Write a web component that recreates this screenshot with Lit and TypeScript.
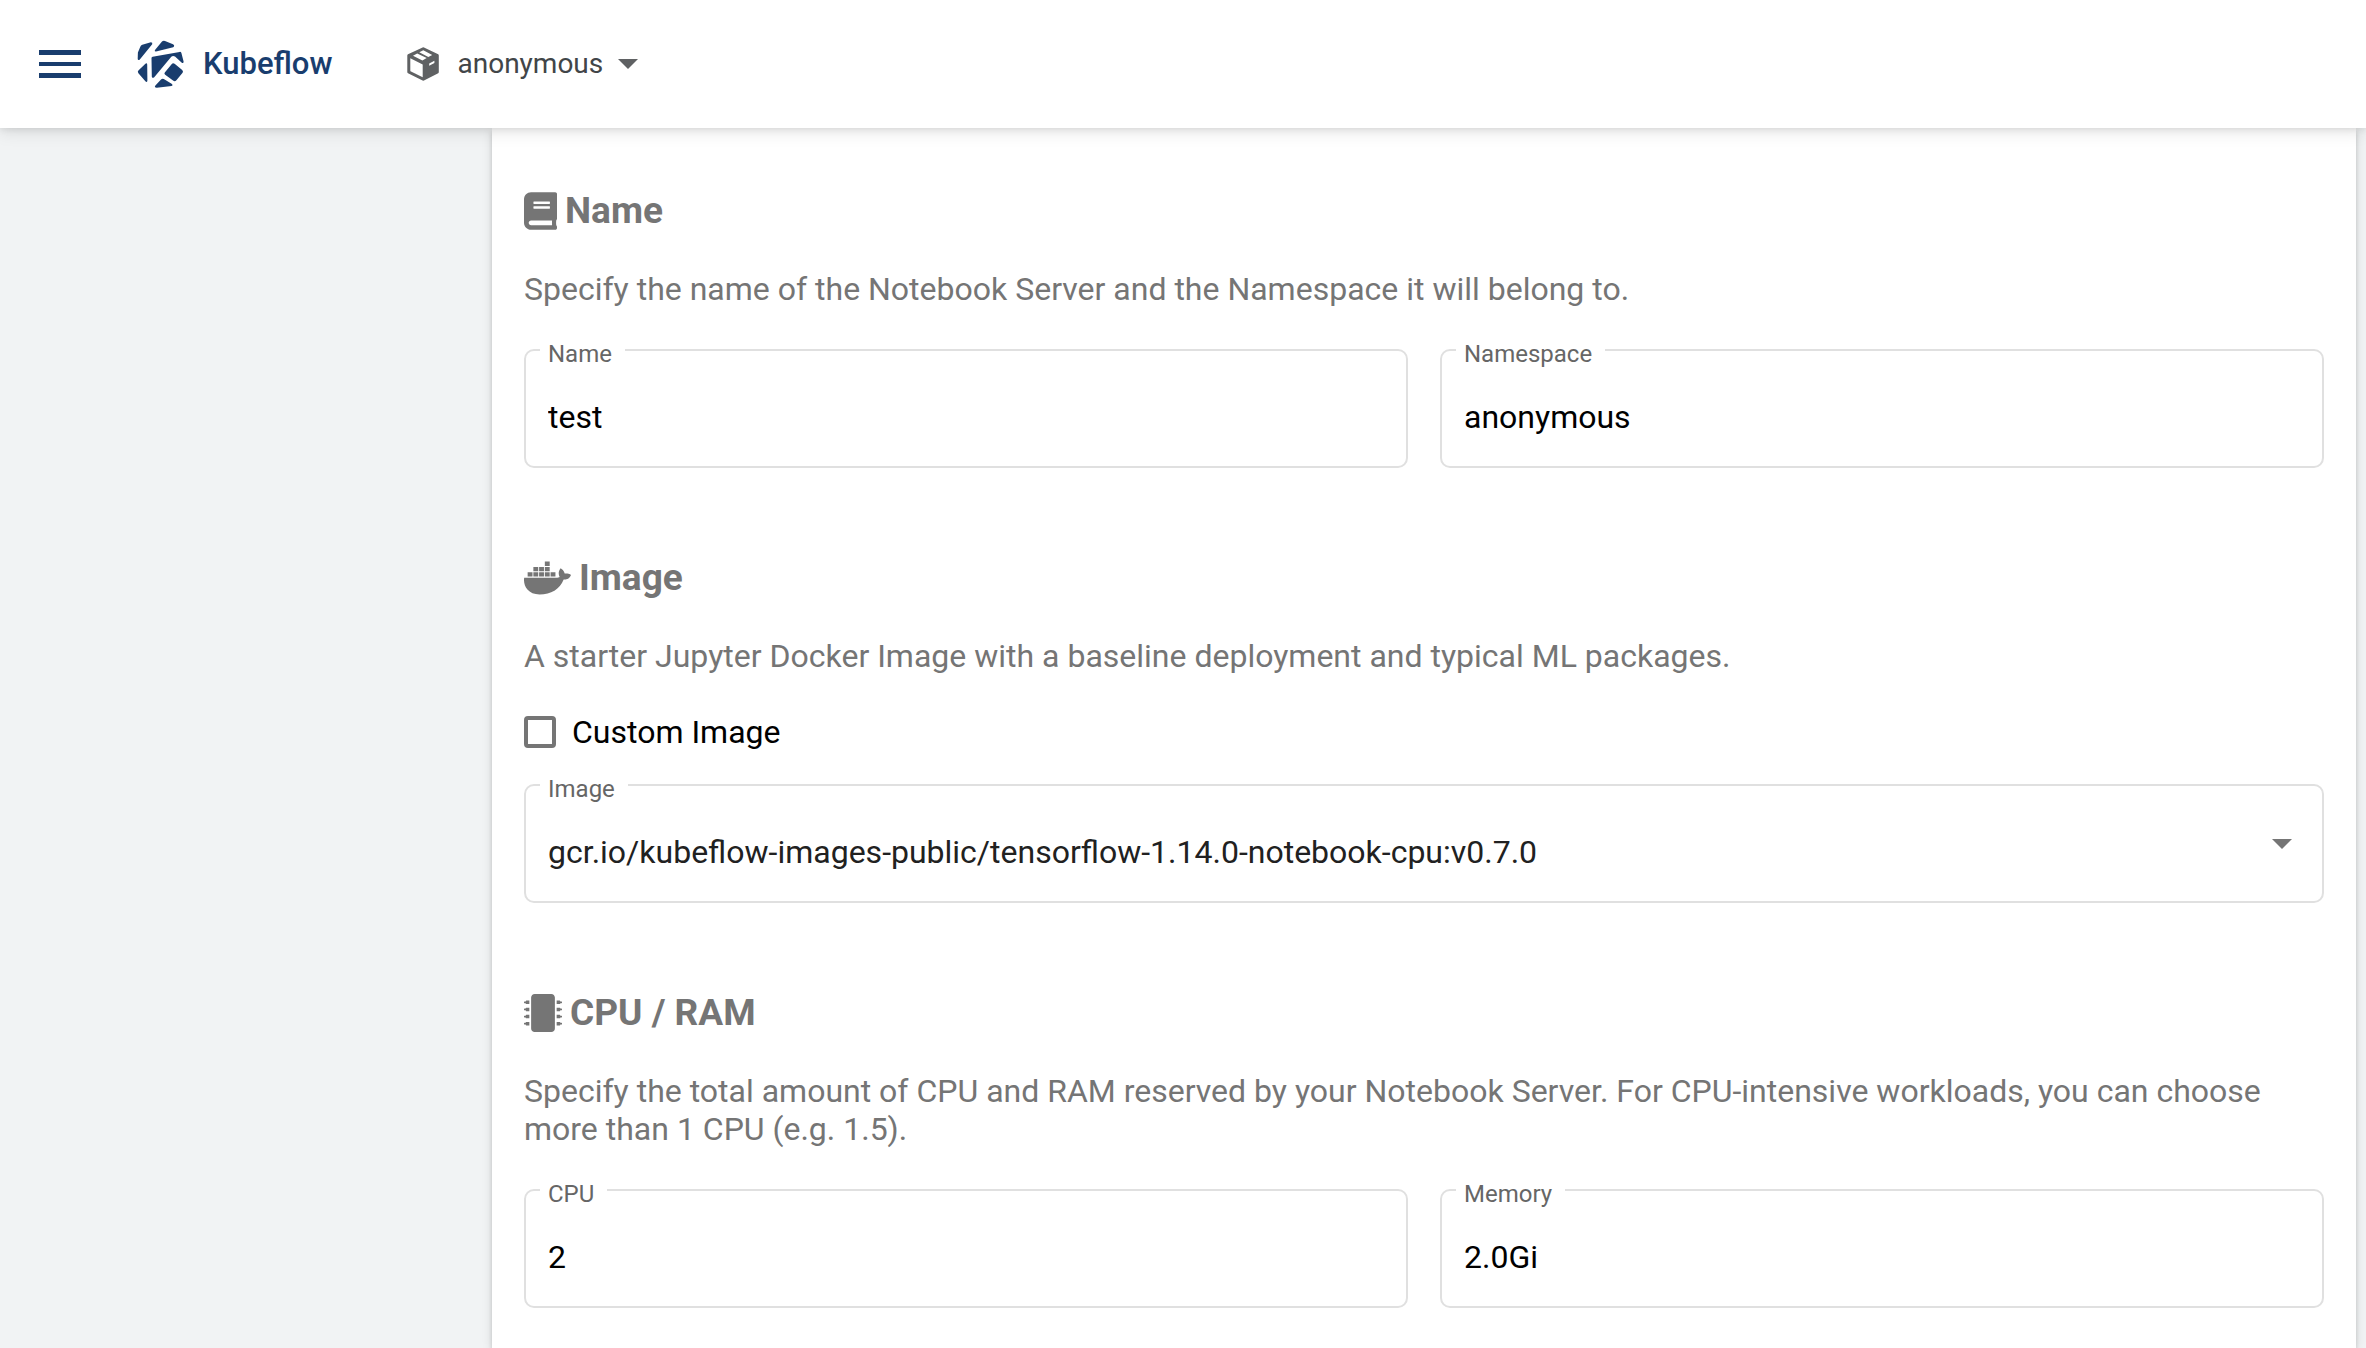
import { LitElement, html, css, svg } from "lit";
import { customElement, property } from "lit/decorators.js";

const bookPath =
  "M448 360V24c0-13.3-10.7-24-24-24H96C43 0 0 43 0 96v320c0 53 43 96 96 96h328c13.3 0 24-10.7 24-24v-16c0-7.5-3.5-14.3-8.9-18.7-4.2-15.4-4.2-59.3 0-74.7 5.4-4.3 8.9-11.1 8.9-18.6zM128 134c0-3.3 2.7-6 6-6h212c3.3 0 6 2.7 6 6v20c0 3.3-2.7 6-6 6H134c-3.3 0-6-2.7-6-6v-20zm0 64c0-3.3 2.7-6 6-6h212c3.3 0 6 2.7 6 6v20c0 3.3-2.7 6-6 6H134c-3.3 0-6-2.7-6-6v-20zm253.4 250H96c-17.7 0-32-14.3-32-32 0-17.6 14.4-32 32-32h285.4c-1.9 17.1-1.9 46.9 0 64z";
const whalePath =
  "M349.9 236.3h-66.1v-59.4h66.1v59.4zm0-204.3h-66.1v60.7h66.1V32zm78.2 144.8H362v59.4h66.1v-59.4zm-156.3-72.1h-66.1v60.1h66.1v-60.1zm78.1 0h-66.1v60.1h66.1v-60.1zm276.8 100c-14.4-9.7-47.6-13.2-73.1-8.4-3.3-24-16.7-44.9-41.1-63.7l-14-9.3-9.3 14c-18.4 27.8-23.4 73.6-3.7 103.8-8.7 4.7-25.8 11.1-48.4 10.7H2.4c-8.7 50.8 5.8 116.8 44 162.1 37.1 43.9 92.7 66.2 165.4 66.2 157.4 0 273.9-72.5 328.4-204.2 21.4.4 67.6.1 91.3-45.2 1.5-2.5 6.6-13.2 8.5-17.1l-13.3-8.9zm-511.1-27.9h-66v59.4h66.1v-59.4zm78.1 0h-66.1v59.4h66.1v-59.4zm78.1 0h-66.1v59.4h66.1v-59.4zm-78.1-72.1h-66.1v60.1h66.1v-60.1z";
const chipPins = [88, 184, 280, 376]
  .map(
    (y) =>
      `M512 ${y + 18}v12a6 6 0 0 1-6 6h-18v6a6 6 0 0 1-6 6h-42v-48h42a6 6 0 0 1 6 6v6h18a6 6 0 0 1 6 6z` +
      `M30 ${y}h42v48H30a6 6 0 0 1-6-6v-6H6a6 6 0 0 1-6-6v-12a6 6 0 0 1 6-6h18v-6a6 6 0 0 1 6-6z`,
  )
  .join("");
const chipPath =
  "M416 48v416c0 26.51-21.49 48-48 48H144c-26.51 0-48-21.49-48-48V48c0-26.51 21.49-48 48-48h224c26.51 0 48 21.49 48 48z" +
  chipPins;

const logoPath =
  "M.9 12.5L3.2 7Q3.8 5.3 5.3 4.8L13 2.4Q16 2 15.2 4.2L2.8 19.6Q.7 21 .7 18.5z" +
  "M18.2 9.8L25 1.6Q26.2.2 28 .9L36 4.2Q38.3 6 36.2 7.2L19 11.4Q16.8 11.6 18.2 9.8z" +
  "M14.5 18Q14.5 17 15.6 16.8L42.6 11.9Q44 11.7 44.4 13L46.6 21.6Q46.6 23.8 44.8 22.8L38 16.6Q36 15.2 34.3 16.8L17 37.4Q14.8 38.6 14.8 36.4z" +
  "M1.4 30.6L8.4 23.8Q10 22.6 10.2 24.4L10.4 40.4Q10.2 42.6 8.6 41.6L1.4 33.2Q.2 31.8 1.4 30.6z" +
  "M27.8 32.4L34.6 24.2Q36 22.6 37.6 23.8L45.2 30Q46.6 31.4 45.6 32.8L39.4 40.2Q38 41.8 36.4 40.8L28.2 34.8Q26.8 33.8 27.8 32.4z" +
  "M18.4 45.4L24 39.4Q25.4 38.2 26.8 39L35 44Q36.4 45.6 34.6 46.1L19.8 47.8Q16.8 47.4 18.4 45.4z";

const parcelPath =
  "M.3 8.4Q.3 7.6 1 7.2L15.6.4Q16.3.1 17 .4L31.2 7.3Q31.8 7.7 31.8 8.4V25Q31.8 25.8 31.2 26.2L17 33.5Q16.3 33.8 15.6 33.5L1 26.2Q.3 25.8 .3 25z" +
  "M3.3 11.3V23.4Q3.3 24.2 4 24.6L15.7 30.2V17.4z" +
  "M6 8.7L15.4 13.5L19.7 11.1L10.2 6.4z" +
  "M12.3 5.3L21.3 10.1L25.2 8L16.3 3.2z" +
  "M22.2 16.4L27.4 13.7V15.9L22.2 18.8z";

const icons: Record<string, { box: string; width: number; path: string }> = {
  book: { box: "0 0 448 512", width: 33, path: bookPath },
  whale: { box: "0 0 640 512", width: 47, path: whalePath },
  chip: { box: "0 0 512 512", width: 38, path: chipPath },
};

const caret = svg`<path d="M0 0h20L10 10z" fill="currentColor" />`;

@customElement("top-bar")
export class TopBar extends LitElement {
  static styles = css`
    :host {
      display: block;
      position: relative;
      z-index: 1;
      background: #fff;
      box-shadow: 0 0 8px rgba(0, 0, 0, 0.12), 0 4px 16px rgba(0, 0, 0, 0.1);
    }
    .bar {
      display: flex;
      align-items: center;
      height: 128px;
      padding: 0 39px;
      box-sizing: border-box;
    }
    button {
      display: flex;
      align-items: center;
      border: 0;
      padding: 0;
      background: none;
      font: inherit;
      cursor: pointer;
    }
    svg {
      display: block;
      flex: none;
    }
    .brand {
      display: flex;
      align-items: center;
      gap: 19px;
      margin: 0 75px 0 56px;
      color: #193d6e;
      font-size: 31px;
      line-height: 36px;
      font-weight: 500;
      text-decoration: none;
    }
    .namespace {
      color: #414548;
      font-size: 28px;
      line-height: 34px;
    }
    .namespace .label {
      margin: 0 15px 0 18px;
    }
    .tint {
      color: #5f6163;
    }
  `;

  render() {
    return html`
      <header class="bar">
        <button aria-label="Menu">
          <svg width="42" height="28" viewBox="0 0 42 28" fill="#193d6e">
            <path d="M0 0h42v5H0zM0 12h42v4H0zM0 23h42v5H0z" />
          </svg>
        </button>
        <a class="brand" href="#">
          <svg width="47" height="48" viewBox="0 0 47 48" fill="#193d6e">
            <path d=${logoPath} />
          </svg>
          <span>Kubeflow</span>
        </a>
        <button class="namespace" aria-haspopup="listbox">
          <svg class="tint" width="32" height="34" viewBox="0 0 32 34" fill="currentColor" fill-rule="evenodd">
            <path d=${parcelPath} />
          </svg>
          <span class="label">anonymous</span>
          <svg class="tint" width="20" height="10" viewBox="0 0 20 10">${caret}</svg>
        </button>
      </header>
    `;
  }
}

@customElement("form-section")
export class FormSection extends LitElement {
  @property() icon = "book";
  @property() heading = "";
  @property() description = "";

  static styles = css`
    :host {
      display: block;
      color: #757575;
    }
    .heading {
      display: flex;
      align-items: center;
      gap: 8px;
      margin: 0 0 37px;
      font-size: 37px;
      line-height: 44px;
      font-weight: 700;
    }
    svg {
      display: block;
      flex: none;
    }
    .description {
      margin: 0 0 41px;
      font-size: 32px;
      line-height: 38px;
    }
  `;

  render() {
    const icon = icons[this.icon];
    return html`
      <section>
        <h3 class="heading">
          <svg width=${icon.width} height="38" viewBox=${icon.box} fill="currentColor">
            <path d=${icon.path} />
          </svg>
          <span>${this.heading}</span>
        </h3>
        <p class="description">${this.description}</p>
        <slot></slot>
      </section>
    `;
  }
}

@customElement("outlined-field")
export class OutlinedField extends LitElement {
  @property() label = "";
  @property() value = "";
  @property() kind: "text" | "select" = "text";

  static styles = css`
    :host {
      display: block;
      min-width: 0;
    }
    .outline {
      position: relative;
      border: 2px solid #e0e0e0;
      border-radius: 10px;
      color: #000;
    }
    .label {
      position: absolute;
      top: -11px;
      left: 14px;
      padding: 0 13px 0 8px;
      background: #fff;
      color: #666;
      font-size: 24px;
      line-height: 28px;
    }
    .control {
      display: block;
      width: 100%;
      height: 115px;
      box-sizing: border-box;
      padding: 36px 22px 20px;
      border: 0;
      outline: 0;
      border-radius: 8px;
      background: none;
      color: inherit;
      font: inherit;
      font-size: 32px;
      line-height: 38px;
      appearance: none;
    }
    .select {
      color: #212121;
    }
    .arrow {
      position: absolute;
      top: 53px;
      right: 30px;
      color: #757575;
      pointer-events: none;
    }
  `;

  render() {
    return html`
      <div class="outline">
        ${this.kind === "select"
          ? html`
              <select id="control" class="control select">
                <option>${this.value}</option>
              </select>
              <svg class="arrow" width="20" height="10" viewBox="0 0 20 10">${caret}</svg>
            `
          : html`<input id="control" class="control" type="text" .value=${this.value} />`}
        <label class="label" for="control">${this.label}</label>
      </div>
    `;
  }
}

@customElement("app-root")
export class AppRoot extends LitElement {
  static styles = css`
    :host {
      display: flex;
      flex-direction: column;
      height: 100vh;
      overflow: hidden;
      background: #f1f3f4;
      font-family: Roboto, "Liberation Sans", sans-serif;
    }
    .page {
      display: flex;
      flex: 1;
      min-height: 0;
    }
    .side {
      flex: none;
      width: 492px;
    }
    .panel {
      flex: 1;
      min-width: 0;
      margin-right: 10px;
      padding: 61px 32px 40px;
      background: #fff;
      box-shadow: 0 4px 4px rgba(0, 0, 0, 0.14), 0 2px 10px rgba(0, 0, 0, 0.12);
    }
    .form {
      display: flex;
      flex-direction: column;
      gap: 88px;
    }
    .pair {
      display: grid;
      grid-template-columns: 1fr 1fr;
      gap: 32px;
    }
    .check {
      display: flex;
      align-items: center;
      gap: 16px;
      margin-bottom: 36px;
      color: #000;
      font-size: 32px;
      line-height: 32px;
    }
    .box {
      appearance: none;
      flex: none;
      width: 32px;
      height: 32px;
      margin: 0;
      border: 4px solid #757575;
      border-radius: 4px;
      background: #fff;
    }
    .box:checked {
      background: #757575;
    }
  `;

  render() {
    return html`
      <top-bar></top-bar>
      <div class="page">
        <nav class="side"></nav>
        <main class="panel">
          <form class="form">
            <form-section
              icon="book"
              heading="Name"
              description="Specify the name of the Notebook Server and the Namespace it will belong to."
            >
              <div class="pair">
                <outlined-field label="Name" value="test"></outlined-field>
                <outlined-field label="Namespace" value="anonymous"></outlined-field>
              </div>
            </form-section>
            <form-section
              icon="whale"
              heading="Image"
              description="A starter Jupyter Docker Image with a baseline deployment and typical ML packages."
            >
              <label class="check"><input class="box" type="checkbox" />Custom Image</label>
              <outlined-field
                kind="select"
                label="Image"
                value="gcr.io/kubeflow-images-public/tensorflow-1.14.0-notebook-cpu:v0.7.0"
              ></outlined-field>
            </form-section>
            <form-section
              icon="chip"
              heading="CPU / RAM"
              description="Specify the total amount of CPU and RAM reserved by your Notebook Server. For CPU-intensive workloads, you can choose more than 1 CPU (e.g. 1.5)."
            >
              <div class="pair">
                <outlined-field label="CPU" value="2"></outlined-field>
                <outlined-field label="Memory" value="2.0Gi"></outlined-field>
              </div>
            </form-section>
          </form>
        </main>
      </div>
    `;
  }
}
